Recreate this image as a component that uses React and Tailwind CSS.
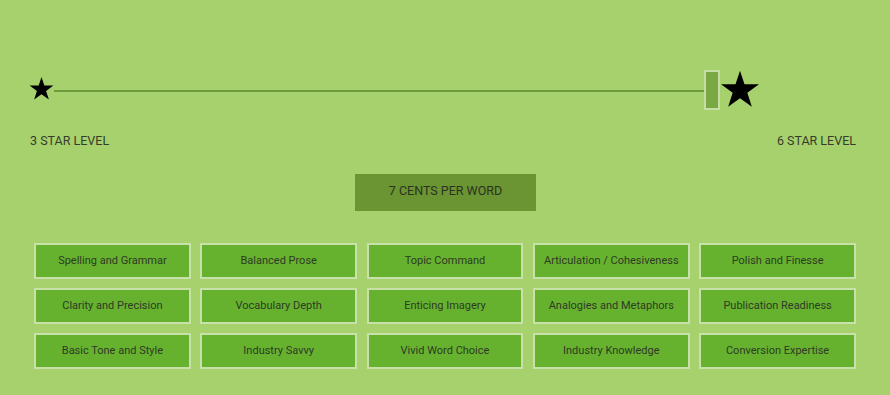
import React from 'react';

const skills = [
  'Spelling and Grammar',
  'Balanced Prose',
  'Topic Command',
  'Articulation / Cohesiveness',
  'Polish and Finesse',
  'Clarity and Precision',
  'Vocabulary Depth',
  'Enticing Imagery',
  'Analogies and Metaphors',
  'Publication Readiness',
  'Basic Tone and Style',
  'Industry Savvy',
  'Vivid Word Choice',
  'Industry Knowledge',
  'Conversion Expertise',
];

function Star({ size }) {
  return (
    <svg width={size} height={size} viewBox="0 0 24 24" className="shrink-0">
      <polygon
        points="12,1 14.7,9.2 23.4,9.2 16.4,14.3 19.1,22.6 12,17.5 4.9,22.6 7.6,14.3 0.6,9.2 9.3,9.2"
        fill="#000"
      />
    </svg>
  );
}

export default function App() {
  return (
    <div className="w-[890px] h-[395px] bg-[#a7d16c] font-['Roboto',sans-serif] text-[#2f3a25] overflow-hidden">
      {/* Slider */}
      <div className="pt-[68px] pl-[29px] flex items-center h-[109px]">
        <Star size={25} />
        <div className="w-[650px] h-[2px] bg-[#6e9b3c] mt-[4px]" />
        <div className="w-[16px] h-[40px] bg-[#7aa843] border-2 border-[#c4dea6] mt-[2px]" />
        <Star size={40} />
      </div>

      {/* Labels */}
      <div className="flex justify-between px-[30px] mt-[23px] text-[12.5px] leading-[18px] text-[#353d2c]">
        <span>3 STAR LEVEL</span>
        <span className="pr-[4px]">6 STAR LEVEL</span>
      </div>

      {/* Price */}
      <div className="flex justify-center mt-[24px]">
        <div className="w-[181px] h-[37px] bg-[#6b9433] flex items-center justify-center text-[12.5px] text-[#2a3320] ml-[1px] pb-[3px]">
          7 CENTS PER WORD
        </div>
      </div>

      {/* Skills grid */}
      <div className="grid grid-cols-5 gap-x-[9.5px] gap-y-[9px] mt-[32px] ml-[34px] w-[822px]">
        {skills.map((s) => (
          <div
            key={s}
            className="h-[36px] bg-[#66b22f] border-2 border-[#c8e1ab] flex items-center justify-center text-[11px] text-[#2e3a24] whitespace-nowrap"
          >
            {s}
          </div>
        ))}
      </div>
    </div>
  );
}
